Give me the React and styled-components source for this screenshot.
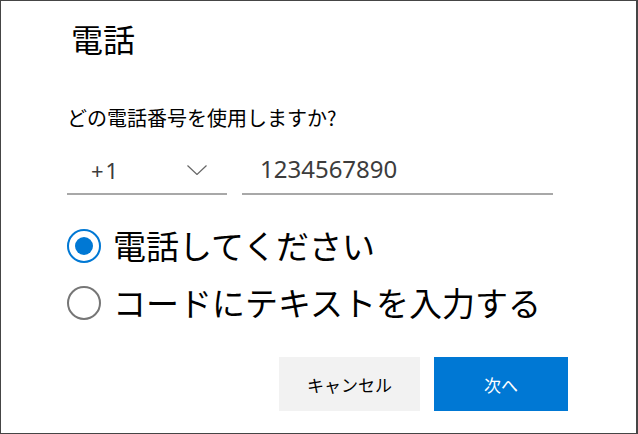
import React from "react";
import styled, { createGlobalStyle } from "styled-components";

const GlobalStyle = createGlobalStyle`
  html, body {
    margin: 0;
    padding: 0;
    background: #fff;
  }
  body {
    font-family: "Noto Sans CJK JP", "Noto Sans", sans-serif;
  }
`;

const Dialog = styled.div`
  box-sizing: border-box;
  width: 638px;
  height: 434px;
  border: 1px solid #454545;
  border-right-width: 2px;
  padding: 17px 68px 0 66px;
  display: flex;
  flex-direction: column;
  color: #000;
  background: #fff;
`;

const Title = styled.h1`
  margin: 0 0 46px 4px;
  font-size: 32px;
  font-weight: 400;
  line-height: 40px;
`;

const Prompt = styled.p`
  margin: 0;
  font-size: 20px;
  line-height: 28px;
`;

const FieldRow = styled.div`
  display: flex;
  gap: 15px;
  margin-top: 20px;
`;

const Field = styled.div`
  box-sizing: border-box;
  height: 43px;
  width: ${(p) => p.$width}px;
  display: flex;
  align-items: center;
  padding: 0 ${(p) => p.$padRight || 0}px ${(p) => p.$padBottom}px ${(p) => p.$padLeft}px;
  border-bottom: 2px solid #a8a8a8;
  font-family: "Noto Sans", sans-serif;
  font-size: ${(p) => p.$size}px;
  letter-spacing: ${(p) => p.$spacing || 0}px;
  line-height: 1;
  color: #3c3c3c;
`;

const Chevron = styled.svg`
  margin-left: auto;
  width: 20px;
  height: 10px;
`;

const Options = styled.div`
  display: flex;
  flex-direction: column;
  margin-top: 22px;
`;

const OptionRow = styled.label`
  display: flex;
  align-items: center;
  gap: 12px;
  height: 57px;
  font-size: 33px;
  line-height: 57px;
`;

const Radio = styled.span`
  box-sizing: border-box;
  flex: none;
  width: 34px;
  height: 34px;
  border-radius: 50%;
  border: 2px solid ${(p) => (p.$checked ? "#0078d4" : "#767676")};
  display: flex;
  align-items: center;
  justify-content: center;

  &::after {
    content: "";
    width: 18px;
    height: 18px;
    border-radius: 50%;
    background: #0078d4;
    display: ${(p) => (p.$checked ? "block" : "none")};
  }
`;

const Actions = styled.div`
  display: flex;
  justify-content: flex-end;
  gap: 14px;
  margin-top: 26px;
`;

const Button = styled.button`
  width: ${(p) => p.$width}px;
  height: 54px;
  border: none;
  border-radius: 0;
  padding: 0;
  font-family: "Noto Sans CJK JP", sans-serif;
  font-size: 17px;
  line-height: 1;
  background: ${(p) => (p.$primary ? "#0078d4" : "#f2f2f2")};
  color: ${(p) => (p.$primary ? "#fff" : "#000")};
  cursor: pointer;
`;

const options = [
  { label: "電話してください", checked: true },
  { label: "コードにテキストを入力する", checked: false },
];

const App = () => {
  return (
    <>
      <GlobalStyle />
      <Dialog>
        <Title>電話</Title>
        <Prompt>どの電話番号を使用しますか?</Prompt>
        <FieldRow>
          <Field $width={160} $size={22} $spacing={2} $padLeft={24} $padRight={20} $padBottom={5}>
            +1
            <Chevron viewBox="0 0 20 10">
              <path d="M0.5 0.5 L10 9.5 L19.5 0.5" fill="none" stroke="#666" strokeWidth="1.2" />
            </Chevron>
          </Field>
          <Field $width={311} $size={24} $padLeft={18} $padBottom={7}>
            1234567890
          </Field>
        </FieldRow>
        <Options>
          {options.map((o) => (
            <OptionRow key={o.label}>
              <Radio $checked={o.checked} />
              {o.label}
            </OptionRow>
          ))}
        </Options>
        <Actions>
          <Button $width={141}>キャンセル</Button>
          <Button $width={134} $primary>
            次へ
          </Button>
        </Actions>
      </Dialog>
    </>
  );
};

export default App;
